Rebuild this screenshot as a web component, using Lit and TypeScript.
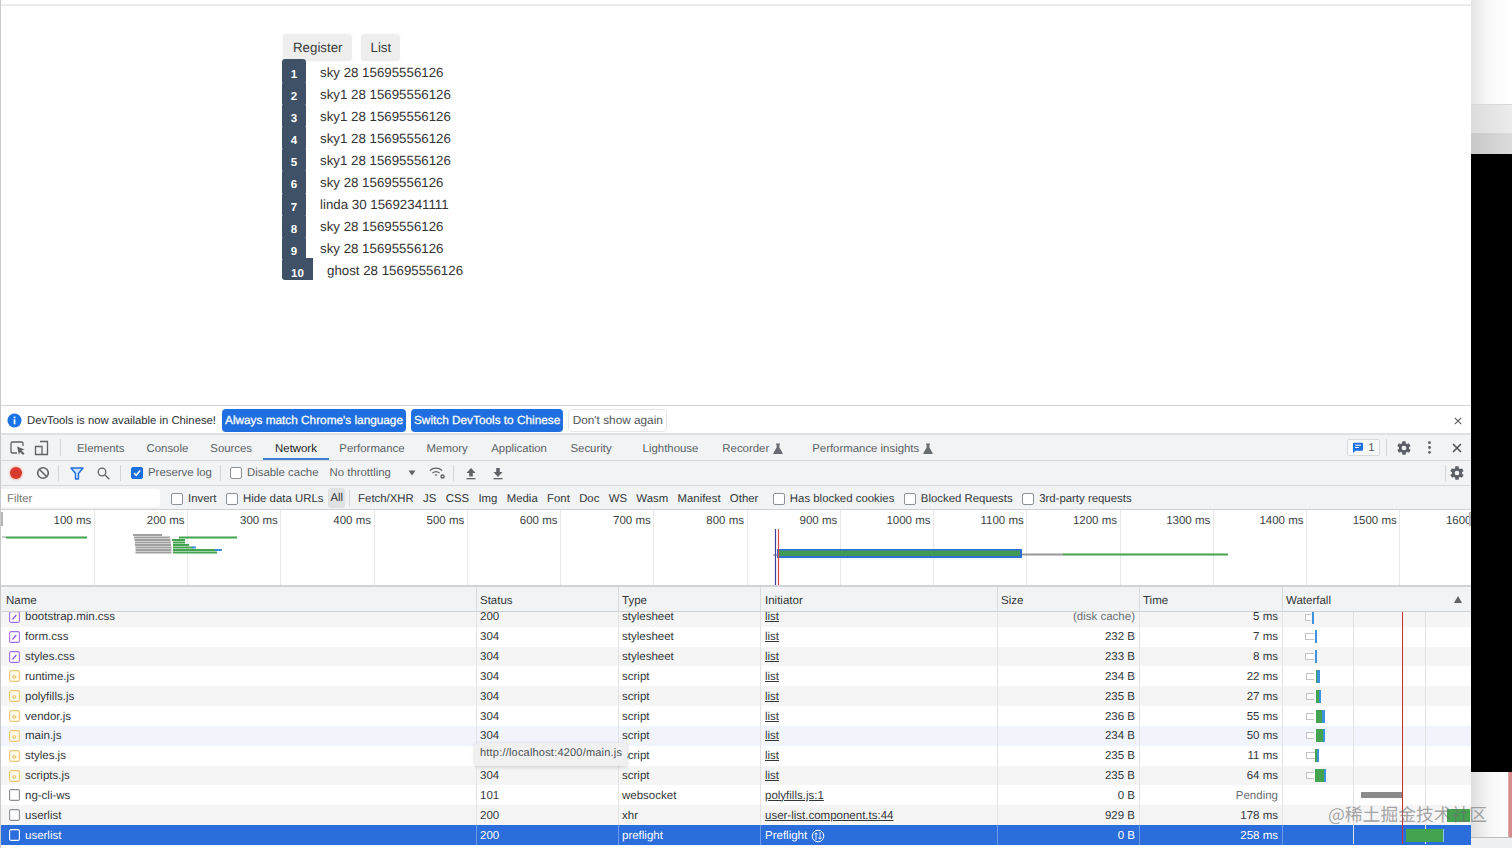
import { LitElement, html, css, svg } from "lit";
import { customElement } from "lit/decorators.js";

const people = [
  ["sky", 1], ["sky1", 2], ["sky1", 3], ["sky1", 4], ["sky1", 5], ["sky", 6],
].map(([n, i]) => ({ i, t: `${n} 28 15695556126` }));
const list = [
  ...people,
  { i: 7, t: "linda 30 15692341111" },
  { i: 8, t: "sky 28 15695556126" },
  { i: 9, t: "sky 28 15695556126" },
  { i: 10, t: "ghost 28 15695556126" },
];

type Seg = [number, number, string];
interface Row { name: string; icon: string; status: string; type: string; init: string; link: boolean; size: string; time: string; segs: Seg[]; tone: string; }
const W = "box", G = "green", B = "blue", Y = "gray";
const rows: Row[] = [
  { name: "bootstrap.min.css", icon: "css", status: "200", type: "stylesheet", init: "list", link: true, size: "(disk cache)", time: "5 ms", tone: "alt", segs: [[22, 6, W], [29, 2, B]] },
  { name: "form.css", icon: "css", status: "304", type: "stylesheet", init: "list", link: true, size: "232 B", time: "7 ms", tone: "", segs: [[22, 9, W], [32, 2, B]] },
  { name: "styles.css", icon: "css", status: "304", type: "stylesheet", init: "list", link: true, size: "233 B", time: "8 ms", tone: "alt", segs: [[22, 9, W], [32, 2, B]] },
  { name: "runtime.js", icon: "js", status: "304", type: "script", init: "list", link: true, size: "234 B", time: "22 ms", tone: "", segs: [[23, 8, W], [33, 1, G], [34, 3, B]] },
  { name: "polyfills.js", icon: "js", status: "304", type: "script", init: "list", link: true, size: "235 B", time: "27 ms", tone: "alt", segs: [[23, 8, W], [33, 3, G], [36, 2, B]] },
  { name: "vendor.js", icon: "js", status: "304", type: "script", init: "list", link: true, size: "236 B", time: "55 ms", tone: "", segs: [[23, 8, W], [33, 6, G], [39, 3, B]] },
  { name: "main.js", icon: "js", status: "304", type: "script", init: "list", link: true, size: "234 B", time: "50 ms", tone: "hover", segs: [[23, 8, W], [33, 7, G], [40, 2, B]] },
  { name: "styles.js", icon: "js", status: "304", type: "script", init: "list", link: true, size: "235 B", time: "11 ms", tone: "", segs: [[23, 9, W], [32, 2, G], [34, 2, B]] },
  { name: "scripts.js", icon: "js", status: "304", type: "script", init: "list", link: true, size: "235 B", time: "64 ms", tone: "alt", segs: [[23, 8, W], [32, 9, G], [41, 2, B]] },
  { name: "ng-cli-ws", icon: "doc", status: "101", type: "websocket", init: "polyfills.js:1", link: true, size: "0 B", time: "Pending", tone: "", segs: [[78, 42, Y]] },
  { name: "userlist", icon: "doc", status: "200", type: "xhr", init: "user-list.component.ts:44", link: true, size: "929 B", time: "178 ms", tone: "alt", segs: [[164, 23, G]] },
  { name: "userlist", icon: "doc", status: "200", type: "preflight", init: "Preflight", link: false, size: "0 B", time: "258 ms", tone: "sel", segs: [[123, 37, G], [160, 1, "pale"]] },
];

const tabs = [
  ["Elements", ""], ["Console", ""], ["Sources", ""], ["Network", "on"], ["Performance", ""],
  ["Memory", ""], ["Application", "nudge"], ["Security", "nudge wide"], ["Lighthouse", ""], ["Recorder", "flask rec"], ["Performance insights", "flask"],
];
const kinds = ["Fetch/XHR", "JS", "CSS", "Img", "Media", "Font", "Doc", "WS", "Wasm", "Manifest", "Other"];
const ticks = [100, 200, 300, 400, 500, 600, 700, 800, 900, 1000, 1100, 1200, 1300, 1400, 1500, 1600];

const flask = html`<svg class="flaskic" width="10" height="11" viewBox="0 0 10 11"><path d="M3 0.5h4v1H6.400v3L9.600 10a.6.6 0 0 1-.5.9H.9a.6.6 0 0 1-.5-.9L3.600 4.500v-3H3z" fill="#666c72"/></svg>`;
const gear = html`<svg width="16" height="16" viewBox="0 0 24 24"><path fill="#5a6066" fill-rule="evenodd" d="M19.400 13a7.500 7.500 0 0 0 0-2l2.100-1.600a.5.5 0 0 0 .1-.7l-2-3.400a.5.5 0 0 0-.6-.2l-2.500 1a7.400 7.400 0 0 0-1.700-1L14.400 2.400a.5.5 0 0 0-.5-.4h-4a.5.5 0 0 0-.5.4L9 5.100a7.400 7.400 0 0 0-1.700 1l-2.500-1a.5.5 0 0 0-.6.2l-2 3.400a.5.5 0 0 0 .1.7L4.500 11a7.500 7.500 0 0 0 0 2l-2.100 1.600a.5.5 0 0 0-.1.7l2 3.400a.5.5 0 0 0 .6.2l2.500-1a7.400 7.400 0 0 0 1.700 1l.4 2.700a.5.5 0 0 0 .5.4h4a.5.5 0 0 0 .5-.4l.4-2.700a7.400 7.400 0 0 0 1.700-1l2.500 1a.5.5 0 0 0 .6-.2l2-3.400a.5.5 0 0 0-.1-.7zM12 15.500a3.500 3.500 0 1 1 0-7 3.500 3.500 0 0 1 0 7z"/></svg>`;
const cross = (s: number, c: string, w: number) => html`<svg width=${s} height=${s} viewBox="0 0 10 10"><path d="M1 1l8 8M9 1l-8 8" stroke=${c} stroke-width=${w} fill="none"/></svg>`;

const fileIcon = (k: string) => {
  if (k === "css") return html`<svg class="fi" width="11" height="12" viewBox="0 0 11 12"><rect x=".6" y=".6" width="9.800" height="10.800" rx="1.500" fill="#fff" stroke="#a56ee6" stroke-width="1.100"/><path d="M3.500 8.500l3.800-4.500" stroke="#8f55dd" stroke-width="1.200"/></svg>`;
  if (k === "js") return html`<svg class="fi" width="11" height="12" viewBox="0 0 11 12"><rect x=".6" y=".6" width="9.800" height="10.800" rx="1.500" fill="#fff9e8" stroke="#ecc777" stroke-width="1.100"/><rect x="3.800" y="5.800" width="3" height="2.400" rx="1" fill="none" stroke="#d9a63f" stroke-width=".8"/></svg>`;
  return html`<svg class="fi" width="11" height="12" viewBox="0 0 11 12"><rect x=".6" y=".6" width="9.800" height="10.800" rx="1.500" fill="#fff" stroke="#8a8e93" stroke-width="1.100"/></svg>`;
};

const overviewBars = svg`
  <path d="M2 27h4" stroke="#9a9a9a" stroke-width="1"/><path d="M6 27.500h81" stroke="#43a34f" stroke-width="2"/>
  <g fill="#a0a0a0">
    <rect x="133" y="24" width="29" height="2"/><rect x="134" y="26.500" width="36" height="2"/><rect x="134.500" y="29" width="36" height="2"/>
    <rect x="135" y="31.500" width="36" height="2"/><rect x="135" y="34" width="36" height="2"/><rect x="135.500" y="36.500" width="36" height="2"/>
    <rect x="135.500" y="39" width="36" height="2"/><rect x="135.500" y="41.500" width="36" height="2"/>
  </g>
  <g fill="#43a34f">
    <rect x="179" y="26.500" width="58" height="2"/><rect x="172" y="29" width="13" height="2"/><rect x="173" y="31.500" width="12" height="2"/>
    <rect x="173" y="34" width="16" height="2"/><rect x="173" y="36.500" width="20" height="2"/><rect x="173" y="39" width="42" height="2"/><rect x="173" y="41.500" width="44" height="2"/>
  </g>
  <g fill="#3d8fd9"><rect x="192" y="36.500" width="4" height="2"/><rect x="215" y="39" width="7" height="2"/></g>
  <path d="M773 45h6" stroke="#777" stroke-width="1"/>
  <rect x="777" y="39" width="245" height="9" fill="#2f6fd6"/><rect x="779" y="40.500" width="241" height="5.500" fill="#3f9a58"/>
  <path d="M1022 44.500h41" stroke="#999" stroke-width="2"/><path d="M1063 44.500h165" stroke="#43a34f" stroke-width="2"/>
  <path d="M775.500 19v57" stroke="#3b3f9e" stroke-width="1.200"/><path d="M778.500 19v57" stroke="#e0484c" stroke-width="1.200"/>
`;

@customElement("app-root")
export class AppRoot extends LitElement {
  static styles = css`
    :host { display: block; width: 1512px; height: 848px; overflow: hidden; font-family: "Liberation Sans", Arial, sans-serif; position: relative; background: #fff; text-rendering: geometricPrecision; }
    .shell { display: grid; grid-template-columns: 1471px 41px; height: 848px; }
    .main { display: flex; flex-direction: column; min-width: 0; height: 848px; border-right: 1px solid #c4c4c4; box-sizing: content-box; margin-right: -1px; }
    .page { height: 406px; flex: none; border-left: 1px solid #c9c9c9; border-bottom: 1px solid #d4d4d4; box-sizing: border-box; padding: 34px 0 0 281px; position: relative; background: #fff; }
    .page::before { content: ""; display: block; height: 2px; background: #ececec; margin: -30px 0 28px -281px; }
    .btns { display: flex; gap: 9px; margin-left: 1px; height: 25px; }
    .btn { background: #eeeeee; border-radius: 4px; color: #3c3c3c; font-size: 13.300px; padding: 0 9px 0 10px; height: 27px; line-height: 27px; box-shadow: 0 0 2px #eee; }
    .li { display: flex; height: 22.100px; align-items: center; gap: 14px; color: #333; font-size: 13.300px; }
    .num { background: #3f5166; color: #fff; font-weight: 700; font-size: 11.500px; align-self: stretch; min-width: 24px; box-sizing: border-box; text-align: center; padding-top: 10px; line-height: 12px; border-radius: 3px 3px 0 0; margin-bottom: -1px; }
    .num.w { min-width: 31px; padding: 10px 0 0; height: 22px; border-radius: 3px 0 0 3px; }
    .li span.tx { position: relative; top: 2px; }

    .dev { flex: 1; min-height: 0; display: flex; flex-direction: column; font-size: 11.400px; color: #4a4f54; border-left: 1px solid #c9c9c9; }
    .info { height: 29px; flex: none; background: #fff; display: flex; align-items: center; padding: 2px 0 0 6px; border-bottom: 2px solid #dfe1e3; box-sizing: border-box; color: #2b2f33; font-size: 11.300px; }
    .info svg.i { margin-right: 5px; }
    .ib { height: 23px; line-height: 23px; border-radius: 4px; background: #1f6fe0; color: #fff; padding: 0 3px; margin-left: 5px; -webkit-text-stroke: .25px #fff; white-space: nowrap; font-size: 11.800px; }
    .ib.first { margin-left: 6px; }
    .ib.plain { background: #fff; color: #50555a; border: 1px solid #e6e6e6; margin-left: 5px; height: 21px; line-height: 21px; padding: 0 3.500px; -webkit-text-stroke: 0; }
    .info .x { margin-left: auto; margin-right: 9px; display: flex; }

    .tabs { height: 26px; flex: none; background: #f1f3f4; border-bottom: 1px solid #d6d8da; box-sizing: border-box; display: flex; align-items: center; padding-left: 5px; }
    .tabs .ic { display: flex; width: 24px; justify-content: center; }
    .sep { width: 1px; height: 17px; background: #d4d6d8; flex: none; }
    .tab { height: 25px; box-sizing: border-box; padding: 2px 11px 0; white-space: nowrap; color: #5c6166; position: relative; display: flex; align-items: center; gap: 4px; }
    .tab.on { color: #222; padding: 2px 12px 0; }
    .tab.on::after { content: ""; position: absolute; left: 0; right: 0; bottom: 0; height: 2px; background: #3f7fd6; }
    .tab.wide { margin-right: 9px; }
    .tab.nudge { margin-left: 1.500px; }
    .tab.rec { margin: 0 7px 0 2px; }
    .tab.on + .tab { padding-left: 10.500px; }
    .tabs-r { margin-left: auto; display: flex; align-items: center; }
    .issue { width: 33px; height: 17px; border: 1px solid #d9dbdd; border-radius: 2px; display: flex; align-items: center; justify-content: center; gap: 4px; background: #f7f8f8; color: #555; margin-right: 6px; box-sizing: border-box; }
    .tabs-r .g { margin: 0 11px 0 9px; display: flex; }
    .tabs-r .k { display: flex; margin-right: 14px; margin-left: 5px; }
    .tabs-r .c { display: flex; margin-right: 9px; margin-left: 7px; }

    .tool { height: 25px; flex: none; background: #f1f3f4; border-bottom: 1px solid #d6d8da; box-sizing: border-box; display: flex; align-items: center; padding-left: 7px; color: #5c6166; }
    .tool > svg { flex: none; }
    .tool .sep { height: 16px; }
    .cb { display: inline-block; width: 10px; height: 10px; border: 1px solid #8d9196; border-radius: 2px; background: #fff; flex: none; }
    .cb.on { background: #1a6fdc; border-color: #1a6fdc; position: relative; }
    .cb.on svg { position: absolute; left: 0; top: 0; }
    .cbl { display: flex; align-items: center; gap: 5px; white-space: nowrap; }
    .grow { flex: 1; }

    .filter { height: 24px; flex: none; background: #f1f3f4; border-bottom: 1px solid #cfd1d3; box-sizing: border-box; display: flex; align-items: center; color: #33373b; white-space: nowrap; padding-top: 2px; }
    .finput { width: 159px; height: 18px; background: #fff; color: #777; line-height: 20px; padding-left: 6px; box-sizing: border-box; margin-right: 11px; border-radius: 0 3px 3px 0; margin-top: -2px; }
    .all { background: #dfe1e3; border-radius: 3px; padding: 0 2px; height: 20px; line-height: 20px; margin: -2px 4px 0 -4.500px; }
    .kinds { display: flex; gap: 9.300px; margin: 0 14.500px 0 8px; align-items: center; }
    .filter .cbl { margin-right: 9.500px; }
    .filter .sep { height: 16px; margin-top: -2px; }

    .over { height: 77px; flex: none; position: relative; background: #fff; display: flex; overflow: hidden; border-bottom: 2px solid #d0d2d4; box-sizing: border-box; padding-left: .5px; }
    .tick { flex: none; width: 93.250px; box-sizing: border-box; border-right: 1px solid #e8e8e8; text-align: right; padding: 5px 2.500px 0 0; color: #3b3f44; white-space: nowrap; height: 75px; font-size: 11.500px; }
    .over svg { position: absolute; left: -1px; top: 0; }
    .over .grip { position: absolute; left: 0; top: 2px; width: 2px; height: 14px; background: #b5b5b5; }
    .over .grip.r { left: auto; right: 0; }

    .tbl { flex: 1; min-height: 0; display: flex; flex-direction: column; position: relative; font-size: 11.500px; }
    .r { display: grid; grid-template-columns: 476px 142px 142px 237px 142px 143px 1fr; }
    .head { height: 25px; flex: none; background: #f1f3f4; border-bottom: 1px solid #cfd1d3; box-sizing: border-box; color: #33373b; }
    .head > div { padding: 4px 0 0 3px; line-height: 20px; border-right: 1px solid #d9dbdd; position: relative; }
    .head > div:first-child { padding-left: 5px; }
    .head > div:nth-child(4) { padding-left: 4px; }
    .head > div:last-child { border-right: 0; }
    .sort { position: absolute; right: 9px; top: 9px; width: 0; height: 0; border-left: 4px solid transparent; border-right: 4px solid transparent; border-bottom: 7px solid #5f6368; }
    .body { flex: 1; min-height: 0; overflow: hidden; position: relative; background: #fff; }
    .rows { margin-top: -5px; }
    .row { height: 19.830px; line-height: 19.830px; color: #33373b; }
    .row.alt { background: #f5f5f5; }
    .row.hover { background: #f1f5fb; }
    .row.sel { background: #2a6ddb; color: #fff; }
    .row > div { padding: 1.400px 3px 0; height: 19.830px; border-right: 1px solid #e3e3e3; white-space: nowrap; overflow: hidden; box-sizing: border-box; }
    .row > div:nth-child(4) { padding-left: 4px; }
    .row.sel > div { border-right-color: #6b9be6; }
    .row > div:last-child { border-right: 0; padding: 0; position: relative; overflow: visible; }
    .name { display: flex; align-items: center; gap: 5px; padding: 0 3px 0 8px !important; }
    .name span { margin-top: 2.800px; }
    .fi { flex: none; }
    .row.sel .fi rect { fill: #2a6ddb; stroke: #fff; }
    .num-r { text-align: right; padding-right: 4px !important; }
    .row .size-cache { color: #6a6e73; }
    .time-pend { color: #6a6e73; }
    .row u { text-underline-offset: 1px; }
    .pf { display: flex; align-items: center; gap: 4px; }
    .seg { position: absolute; z-index: 2; }
    .seg.box { height: 7px; top: 6.500px; background: #fff; border: 1px solid #c4c4c4; border-right: 0; box-sizing: border-box; }
    .seg.green { height: 13px; top: 3.500px; background: #43a34f; }
    .seg.blue { height: 13px; top: 3.500px; background: #3b93dc; }
    .seg.gray { height: 6px; top: 7px; background: #8a8a8a; }
    .seg.pale { height: 13px; top: 3.500px; background: #8fc7ea; }
    .wl { position: absolute; top: 0; bottom: 4px; width: 1px; background: #e2e2e2; z-index: 1; }
    .wl.red { background: #c9343a; z-index: 3; }

    .tip { position: absolute; left: 475px; top: 743px; width: 152px; height: 23px; background: #f0f0f0; border-radius: 3px; box-shadow: 0 1px 4px rgba(0,0,0,.18); color: #4c5055; font-size: 11px; line-height: 21px; padding-left: 5px; box-sizing: border-box; letter-spacing: .2px; white-space: nowrap; z-index: 3; }
    .mark { position: absolute; left: 1328px; top: 801px; font-family: "Noto Sans CJK SC", "Liberation Sans", sans-serif; font-size: 17.800px; line-height: 26px; color: rgba(110,110,110,.62); white-space: nowrap; z-index: 4; }

    .side { display: flex; flex-direction: column; height: 848px; }
    .s1 { height: 105px; background: linear-gradient(90deg, #e4e4e4, #f8f8f8 40%, #fff); border-bottom: 1px solid #d8d8d8; box-sizing: border-box; }
    .s2 { height: 28px; background: linear-gradient(90deg, #dcdcdc, #ececec); }
    .s3 { height: 21px; background: linear-gradient(90deg, #c8c8c8, #dcdcdc); }
    .s4 { flex: 1; background: #000; }
    .s5 { height: 66px; background: linear-gradient(90deg, #dedede, #f6f6f6 45%, #fff 90%, #d68a8c 92%, #d68a8c); border-bottom: 1px solid #bdbdbd; box-sizing: border-box; }
    .s6 { height: 10px; background: #eef0f1; }
  `;

  render() {
    return html`
      <div class="shell">
        <div class="main">
          <div class="page">
            <div class="btns"><div class="btn">Register</div><div class="btn">List</div></div>
            ${list.map((p) => html`<div class="li"><span class="num ${p.i === 10 ? "w" : ""}">${p.i}</span><span class="tx">${p.t}</span></div>`)}
          </div>
          <div class="dev">
            <div class="info">
              <svg class="i" width="15" height="15" viewBox="0 0 15 15"><circle cx="7.500" cy="7.500" r="7" fill="#1a73e8"/><rect x="6.700" y="6.300" width="1.700" height="5" fill="#fff"/><rect x="6.700" y="3.600" width="1.700" height="1.700" fill="#fff"/></svg>
              <span>DevTools is now available in Chinese!</span>
              <span class="ib first">Always match Chrome's language</span>
              <span class="ib">Switch DevTools to Chinese</span>
              <span class="ib plain">Don't show again</span>
              <span class="x">${cross(8, "#555", 1.300)}</span>
            </div>
            <div class="tabs">
              <span class="ic"><svg width="16" height="16" viewBox="0 0 16 16"><path d="M7 13H2.500A1.500 1.500 0 0 1 1 11.500v-8A1.500 1.500 0 0 1 2.500 2h9A1.500 1.500 0 0 1 13 3.500V6" fill="none" stroke="#5f6368" stroke-width="1.300"/><path d="M7 6.500l7.500 3-3 1 3 3-1.500 1.500-3-3-1 3z" fill="#5f6368"/></svg></span>
              <span class="ic"><svg width="16" height="16" viewBox="0 0 16 16"><path d="M6 1.500h7.500v13H8M1.500 6.500H8v8H1.500z" fill="none" stroke="#5f6368" stroke-width="1.300"/></svg></span>
              <span class="sep" style="margin:0 5px 0 6px"></span>
              ${tabs.map(([t, c]) => html`<div class="tab ${c}">${t}${c.includes("flask") ? flask : ""}</div>`)}
              <div class="tabs-r">
                <div class="issue"><svg width="12" height="12" viewBox="0 0 12 12"><path d="M1 1.500A.8.8 0 0 1 1.800.7h8.400a.8.8 0 0 1 .8.800v6.500a.8.8 0 0 1-.8.8H3.500L1 11z" fill="#1f6fe0"/><path d="M3 3.200h6M3 5.500h4" stroke="#fff" stroke-width="1"/></svg>1</div>
                <span class="sep"></span>
                <span class="g">${gear}</span>
                <span class="k"><svg width="3" height="13" viewBox="0 0 3 13"><circle cx="1.500" cy="1.700" r="1.400" fill="#5a6066"/><circle cx="1.500" cy="6.500" r="1.400" fill="#5a6066"/><circle cx="1.500" cy="11.300" r="1.400" fill="#5a6066"/></svg></span>
                <span class="c">${cross(10, "#4a4f54", 1.500)}</span>
              </div>
            </div>
            <div class="tool">
              <svg width="16" height="16" viewBox="0 0 16 16"><circle cx="8" cy="8" r="7.500" fill="#f6d5d2"/><circle cx="8" cy="8" r="6" fill="#d93a2e"/></svg>
              <svg style="margin-left:12px" width="14" height="14" viewBox="0 0 14 14"><circle cx="7" cy="7" r="5.300" fill="none" stroke="#5f6368" stroke-width="1.600"/><path d="M3.300 3.300l7.400 7.400" stroke="#5f6368" stroke-width="1.600"/></svg>
              <span class="sep" style="margin:0 11px 0 8px"></span>
              <svg width="14" height="13" viewBox="0 0 14 13"><path d="M1 1h12L8.500 6.500V12h-3V6.500z" fill="#cfe2fb" stroke="#1f6fe0" stroke-width="1.400" stroke-linejoin="round"/></svg>
              <svg style="margin-left:13px" width="13" height="13" viewBox="0 0 13 13"><circle cx="5" cy="5" r="3.800" fill="none" stroke="#5f6368" stroke-width="1.300"/><path d="M8 8l4.300 4.300" stroke="#5f6368" stroke-width="1.300"/></svg>
              <span class="sep" style="margin:0 10px 0 10px"></span>
              <span class="cbl"><span class="cb on"><svg width="10" height="10" viewBox="0 0 10 10"><path d="M2 5l2.200 2.300L8.200 2.600" fill="none" stroke="#fff" stroke-width="1.500"/></svg></span>Preserve log</span>
              <span class="sep" style="margin:0 9px 0 8px"></span>
              <span class="cbl"><span class="cb"></span>Disable cache</span>
              <span style="margin-left:11px">No throttling</span>
              <svg style="margin-left:17px" width="8" height="6" viewBox="0 0 8 6"><path d="M0.500 0.500h7L4 5.500z" fill="#5f6368"/></svg>
              <svg style="margin-left:13.500px" width="17" height="14" viewBox="0 0 17 14"><path d="M1 4.500a9 9 0 0 1 12 0M3.500 7a5.500 5.500 0 0 1 7 0M6 9.300a2 2 0 0 1 2 0" fill="none" stroke="#5f6368" stroke-width="1.300"/><circle cx="13.500" cy="10.500" r="2.200" fill="#5f6368"/><circle cx="13.500" cy="10.500" r=".8" fill="#f1f3f4"/></svg>
              <span class="sep" style="margin:0 10.500px 0 7px"></span>
              <svg width="12" height="13" viewBox="0 0 12 13"><path d="M6 1l4.500 5H7.800v3.500H4.200V6H1.500z" fill="#5f6368"/><rect x="1.500" y="11" width="9" height="1.300" fill="#5f6368"/></svg>
              <svg style="margin-left:15.500px" width="12" height="13" viewBox="0 0 12 13"><path d="M6 10l4.500-5H7.800V1H4.200v4H1.500z" fill="#5f6368"/><rect x="1.500" y="11" width="9" height="1.300" fill="#5f6368"/></svg>
              <span class="grow"></span>
              <span class="sep" style="margin-right:3px"></span>
              <span style="display:flex;margin-right:6px">${gear}</span>
            </div>
            <div class="filter">
              <div class="finput">Filter</div>
              <span class="cbl"><span class="cb"></span>Invert</span>
              <span class="cbl"><span class="cb"></span>Hide data URLs</span>
              <span class="all">All</span>
              <span class="sep"></span>
              <span class="kinds">${kinds.map((k) => html`<span>${k}</span>`)}</span>
              <span class="cbl"><span class="cb"></span>Has blocked cookies</span>
              <span class="cbl"><span class="cb"></span>Blocked Requests</span>
              <span class="cbl"><span class="cb"></span>3rd-party requests</span>
            </div>
            <div class="over">
              ${ticks.map((t) => html`<div class="tick">${t} ms</div>`)}
              <svg width="1472" height="76" viewBox="0 0 1472 76">${overviewBars}</svg>
              <span class="grip"></span><span class="grip r"></span>
            </div>
            <div class="tbl">
              <div class="r head">
                <div>Name</div><div>Status</div><div>Type</div><div>Initiator</div><div>Size</div><div>Time</div>
                <div>Waterfall<span class="sort"></span></div>
              </div>
              <div class="body">
                <span class="wl" style="left:1352px"></span>
                <span class="wl red" style="left:1401px"></span>
                <span class="wl" style="left:1424px"></span>
                <div class="rows">
                  ${rows.map((r) => html`
                    <div class="r row ${r.tone}">
                      <div class="name">${fileIcon(r.icon)}<span>${r.name}</span></div>
                      <div>${r.status}</div>
                      <div>${r.type}</div>
                      <div>${r.link ? html`<u>${r.init}</u>` : html`<span class="pf">${r.init}<svg width="14" height="14" viewBox="0 0 14 14"><circle cx="7" cy="7" r="5.800" fill="none" stroke="#fff" stroke-width="1"/><path d="M5 11V4M3.400 5.500L5 3.800l1.600 1.700M9 3v7M7.400 8.500L9 10.200l1.600-1.700" fill="none" stroke="#fff" stroke-width=".9"/></svg></span>`}</div>
                      <div class="num-r ${r.size.startsWith("(") ? "size-cache" : ""}">${r.size}</div>
                      <div class="num-r ${r.time === "Pending" ? "time-pend" : ""}">${r.time}</div>
                      <div>${r.segs.map(([x, w, k]) => html`<span class="seg ${k}" style="left:${x}px;width:${w}px"></span>`)}</div>
                    </div>`)}
                </div>
              </div>
            </div>
          </div>
        </div>
        <div class="side">
          <div class="s1"></div><div class="s2"></div><div class="s3"></div><div class="s4"></div><div class="s5"></div><div class="s6"></div>
        </div>
      </div>
      <div class="tip">http://localhost:4200/main.js</div>
      <div class="mark">@稀土掘金技术社区</div>
    `;
  }
}
